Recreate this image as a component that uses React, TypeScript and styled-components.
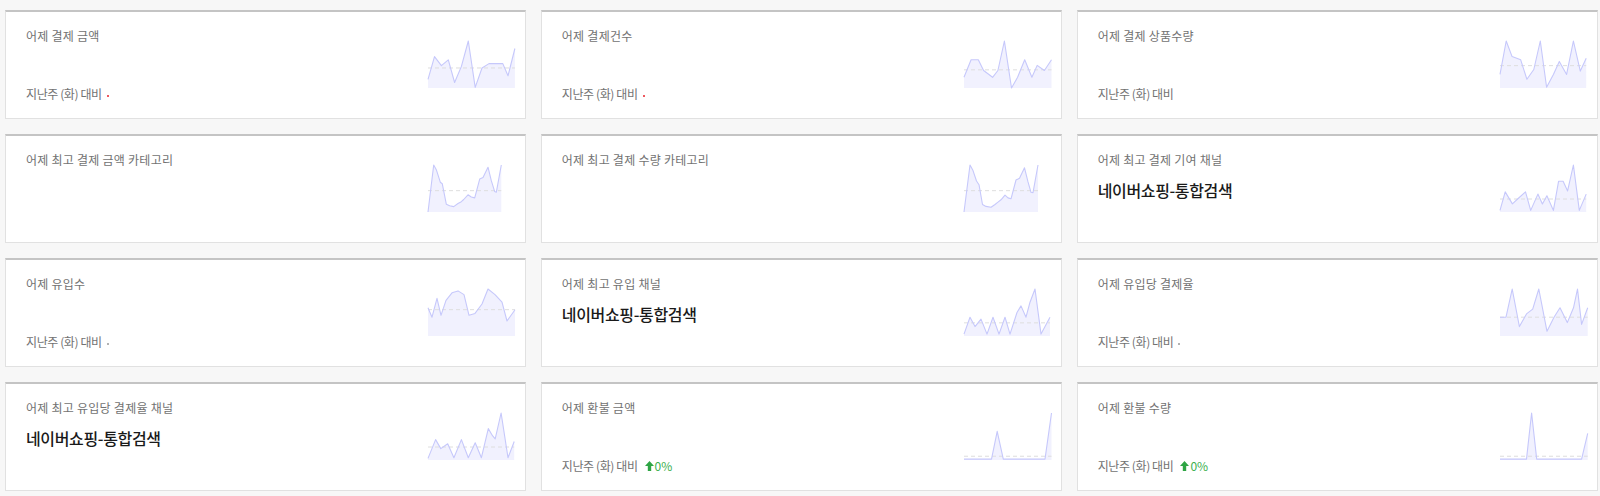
import React from 'react';
import styled, { createGlobalStyle } from 'styled-components';

const GlobalStyle = createGlobalStyle`
  html, body { margin: 0; padding: 0; background: #f7f7f7; }
  body { font-family: "Noto Sans CJK KR", "Noto Sans", sans-serif; }
`;

const Page = styled.main`
  display: grid;
  grid-template-columns: repeat(3, 1fr);
  column-gap: 14.5px;
  row-gap: 15px;
  padding: 10px 2px 5px 5px;
`;

const Card = styled.section`
  box-sizing: border-box;
  height: 109px;
  background: #fff;
  border: 1px solid #e1e1e1;
  border-top: 2px solid #c4c4c4;
  display: flex;
  padding: 15px 9px 15px 20px;
`;

const Info = styled.div`
  flex: 1;
  min-width: 0;
  display: flex;
  flex-direction: column;
`;

const Title = styled.h3`
  margin: 0;
  font-size: 12px;
  line-height: 18px;
  font-weight: 400;
  color: #727272;
  letter-spacing: 0.25px;
`;

const Value = styled.div`
  margin-top: 10px;
  font-size: 16px;
  line-height: 22px;
  font-weight: 500;
  color: #1a1a1a;
  letter-spacing: -0.35px;
`;

const Compare = styled.div`
  margin-top: auto;
  display: flex;
  align-items: center;
  font-size: 12px;
  line-height: 18px;
  color: #727272;
  letter-spacing: -0.4px;
`;

const Mark = styled.span<{ $tone: 'red' | 'gray' }>`
  width: 2px;
  height: 2px;
  margin-left: 5px;
  margin-top: 4px;
  border-radius: 1px;
  background: ${(p) => (p.$tone === 'red' ? '#e8202a' : '#999')};
`;

const Up = styled.span`
  display: inline-flex;
  align-items: center;
  margin-left: 7px;
  color: #3cb04f;
  gap: 1px;
  letter-spacing: 0;
`;

const ChartBox = styled.div`
  flex: none;
  width: 88px;
  height: 47px;
  margin-top: 14px;
`;

type Pt = [number, number];

const H = 47;
const S = 47 / 50;

function Spark({ pts, dash }: { pts: Pt[]; dash: number }) {
  const p = pts.map(([x, y]) => [x, y * S] as Pt);
  const line = p.map(([x, y], i) => `${i ? 'L' : 'M'}${x.toFixed(1)} ${y.toFixed(1)}`).join(' ');
  const last = p[p.length - 1];
  const area = `${line} L${last[0]} ${H} L${p[0][0]} ${H} Z`;
  return (
    <svg width="88" height={H} viewBox={`0 0 88 ${H}`} style={{ overflow: 'visible', display: 'block' }}>
      <path d={area} fill="#f1f1fe" />
      <line x1={p[0][0]} x2={last[0]} y1={dash * S} y2={dash * S} stroke="#dedede" strokeDasharray="4 3" strokeWidth="1" />
      <path d={line} fill="none" stroke="#c6c8fb" strokeWidth="1.1" strokeLinejoin="round" />
    </svg>
  );
}

function ArrowUp() {
  return (
    <svg width="9" height="10" viewBox="0 0 9 10">
      <path d="M4.5 0 L9 5 H6.2 V10 H2.8 V5 H0 Z" fill="#2ea544" />
    </svg>
  );
}

type Cmp = 'red' | 'gray' | 'plain' | 'up' | null;

interface Item {
  title: string;
  value?: string;
  cmp: Cmp;
  pts: Pt[];
  dash: number;
}

const items: Item[] = [
  {
    title: '어제 결제 금액', cmp: 'red', dash: 28.7,
    pts: [[0, 40.8], [6.5, 16.6], [13.4, 26.3], [20.3, 20], [26.6, 44.2], [33.4, 27], [40.3, 0], [47.2, 49.4], [54, 28.7], [61, 24], [74.8, 24], [80, 37], [86.9, 8]],
  },
  {
    title: '어제 결제건수', cmp: 'red', dash: 30.7,
    pts: [[0, 38.6], [7.1, 20], [14.3, 20], [19.6, 31.4], [28.6, 38.6], [33.9, 31.4], [40.4, 0], [47.5, 50], [53.6, 38.6], [60.7, 20], [67.9, 38.6], [73.2, 26], [80.4, 31.4], [87.5, 20]],
  },
  {
    title: '어제 결제 상품수량', cmp: 'plain', dash: 26.2,
    pts: [[0, 35.5], [6.2, 0], [12.1, 16.6], [20.7, 20], [26.9, 40.7], [33.8, 30.3], [40.3, 0], [46.6, 49.3], [53.4, 35.5], [59.3, 21.7], [66.6, 35.5], [73.4, 0], [80.3, 32], [86.2, 18.3]],
  },
  {
    title: '어제 최고 결제 금액 카테고리', cmp: null, dash: 27.3,
    pts: [[0, 50], [5.7, 0], [8.3, 5], [12.3, 18.3], [14.3, 20], [18.3, 41.7], [21.7, 43.3], [25.7, 44.3], [30, 41], [33.3, 39], [35.7, 36.7], [40, 31.7], [43.3, 34], [46.7, 35], [51.7, 15], [55, 13.3], [60, 2.3], [63.3, 16.7], [66.7, 28.3], [68.3, 29], [73.3, 0]],
  },
  {
    title: '어제 최고 결제 수량 카테고리', cmp: null, dash: 27.3,
    pts: [[0, 50], [6, 0], [9, 6], [12.5, 17], [15, 21], [18.5, 42], [22, 44], [27, 45], [31, 42], [34, 39.5], [37, 37], [41, 32], [44, 35], [47, 36], [52, 16], [55.5, 14], [60.5, 3], [64, 18], [67, 29], [69, 29.5], [74, 0]],
  },
  {
    title: '어제 최고 결제 기여 채널', value: '네이버쇼핑-통합검색', cmp: null, dash: 36.2,
    pts: [[0, 48.3], [5.2, 28.6], [12.4, 41.4], [17.6, 36.2], [25.5, 28.6], [30.7, 48.3], [37.9, 31], [42.4, 41.4], [46.9, 32.8], [53.4, 48.3], [58.6, 17.2], [63.1, 17.2], [67.6, 27.6], [73.4, 0], [79.3, 48.3], [86.2, 31]],
  },
  {
    title: '어제 유입수', cmp: 'gray', dash: 22,
    pts: [[0, 20], [4, 30], [9, 10], [13, 28], [18, 12], [24, 4], [30, 2], [36, 6], [41, 28], [47, 26], [54, 16], [60, 0], [67, 6], [74, 14], [79, 34], [87, 22]],
  },
  {
    title: '어제 최고 유입 채널', value: '네이버쇼핑-통합검색', cmp: null, dash: 36,
    pts: [[0, 48], [6, 30], [11, 40], [17, 32], [23, 48], [29, 30], [35, 48], [41, 30], [46, 48], [53, 25], [57, 18], [62, 30], [66, 14], [71, 0], [77, 48], [86, 30]],
  },
  {
    title: '어제 유입당 결제율', cmp: 'gray', dash: 30,
    pts: [[0, 30], [6, 30], [12.2, 0], [19.4, 40], [26.5, 26.5], [32.7, 21.4], [38.8, 0], [47, 45], [54, 30], [60, 20], [67.3, 35.7], [73.5, 20], [77.5, 0], [81.6, 37.7], [87.7, 20]],
  },
  {
    title: '어제 최고 유입당 결제율 채널', value: '네이버쇼핑-통합검색', cmp: null, dash: 36.2,
    pts: [[0, 48.3], [7.6, 28.3], [12.8, 37.9], [19.7, 32.8], [25.9, 47.6], [33.4, 28.3], [40.3, 47.6], [47.2, 31.7], [53.4, 47.6], [60.3, 16.6], [64.5, 24.1], [67.2, 27.6], [73.1, 0], [80, 47.6], [86.2, 30.3]],
  },
  {
    title: '어제 환불 금액', cmp: 'up', dash: 46,
    pts: [[0, 49], [27.5, 49], [33.2, 19.6], [39.3, 49], [81, 49], [87.5, 0]],
  },
  {
    title: '어제 환불 수량', cmp: 'up', dash: 46,
    pts: [[0, 49], [26.5, 49], [31.6, 0], [36.7, 49], [81.6, 49], [87.7, 21.7]],
  },
];

function StatCard({ item }: { item: Item }) {
  return (
    <Card>
      <Info>
        <Title>{item.title}</Title>
        {item.value && <Value>{item.value}</Value>}
        {item.cmp && (
          <Compare>
            지난주 (화) 대비
            {item.cmp === 'red' && <Mark $tone="red" />}
            {item.cmp === 'gray' && <Mark $tone="gray" />}
            {item.cmp === 'up' && (
              <Up>
                <ArrowUp />
                0%
              </Up>
            )}
          </Compare>
        )}
      </Info>
      <ChartBox>
        <Spark pts={item.pts} dash={item.dash} />
      </ChartBox>
    </Card>
  );
}

export default function App() {
  return (
    <>
      <GlobalStyle />
      <Page>
        {items.map((it) => (
          <StatCard key={it.title} item={it} />
        ))}
      </Page>
    </>
  );
}
